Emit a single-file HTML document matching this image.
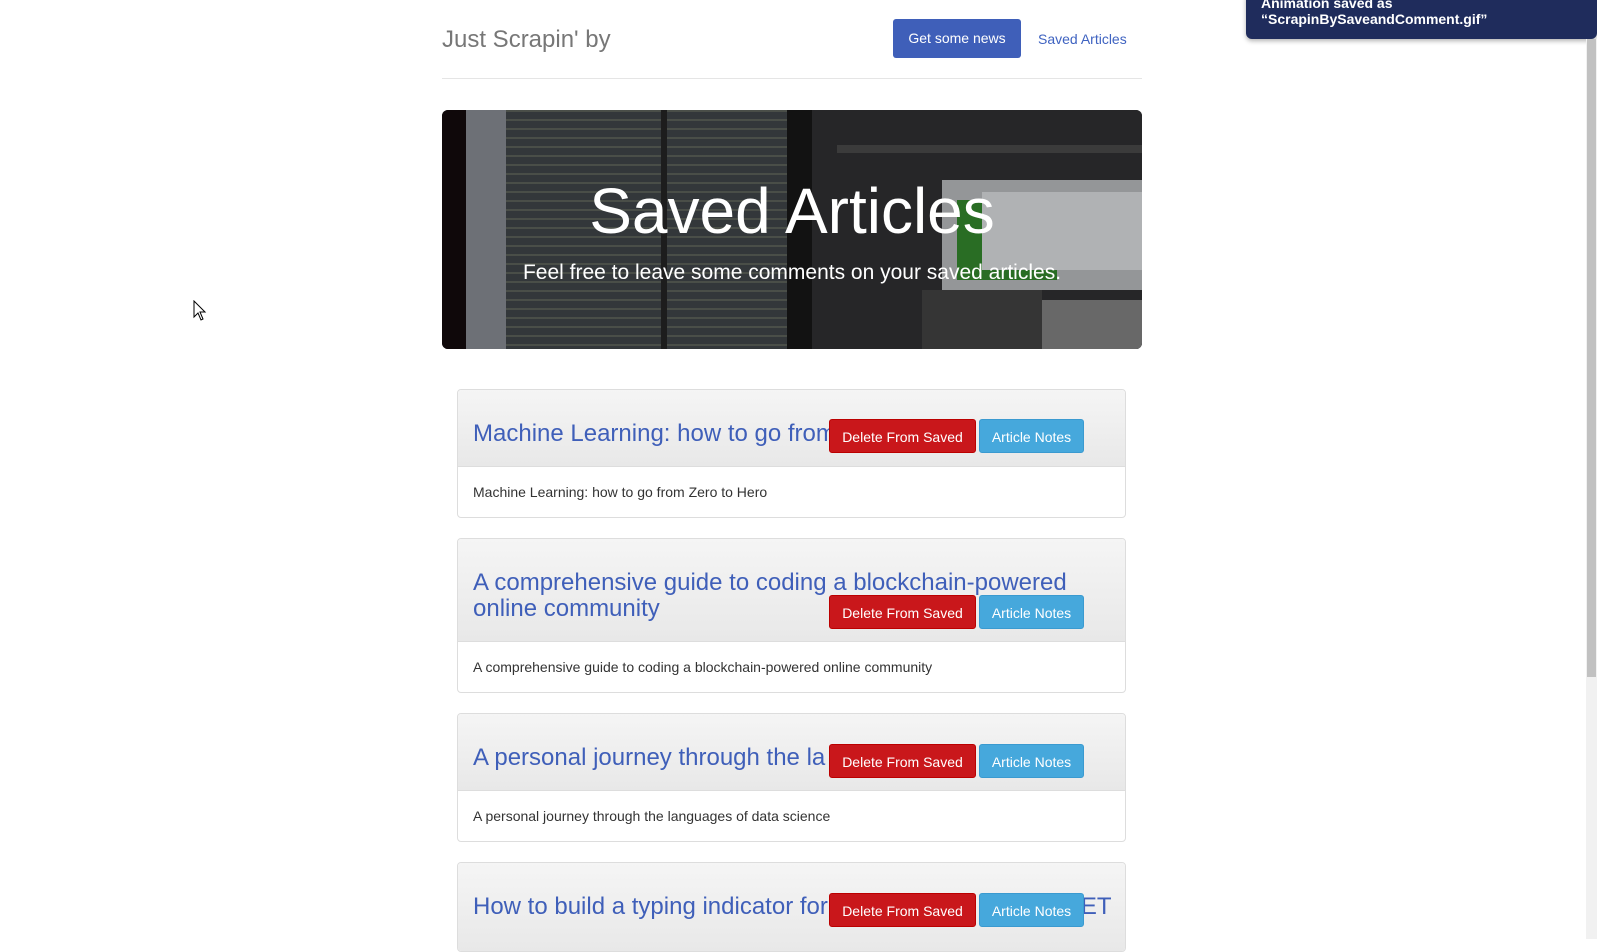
<!DOCTYPE html>
<html><head><meta charset="utf-8"><style>
*{box-sizing:border-box}
body{margin:0;width:1597px;height:939px;overflow:hidden;background:#fff;font-family:"Liberation Sans",sans-serif;position:relative}
.abs{position:absolute}
.brand{left:442px;top:26px;font-size:24px;color:#777}
.btnnav{left:893px;top:19px;width:128px;height:39px;background:#3f5fb9;color:#fff;font-size:14px;border-radius:3px;text-align:center;line-height:39px}
.link2{left:1038px;top:31px;font-size:14px;color:#3f63c1}
.hr{left:442px;top:78px;width:700px;height:1px;background:#e5e5e5}
.jumbo{left:442px;top:110px;width:700px;height:239px;border-radius:6px;overflow:hidden;background:#1a1a1a}
.jumbo .bg{position:absolute;top:0;height:100%}
.code{background:repeating-linear-gradient(180deg,rgba(200,210,150,.18) 0 2px,transparent 2px 9px),#3b3f43}
.h1{position:absolute;left:0;width:700px;top:69px;line-height:64px;text-align:center;color:#fff;font-size:64px}
.sub{position:absolute;left:0;width:700px;top:152px;line-height:21px;text-align:center;color:#fff;font-size:21px}
.card{left:457px;width:669px;border:1px solid #ddd;border-radius:4px;overflow:hidden;background:#fff}
.ch{background:linear-gradient(#f5f5f5,#e8e8e8);border-bottom:1px solid #ddd;position:relative}
.ch h3{margin:0;position:absolute;left:15px;font-size:24px;font-weight:normal;color:#3f5fb9;line-height:26px}
.cb{padding:0 15px;font-size:14px;color:#333;height:50px;line-height:50px}
.del,.note{position:absolute;height:34px;line-height:34px;color:#fff;font-size:14px;text-align:center;border-radius:3px}
.del{left:371px;width:147px;background:#c9171b;border:1px solid #b00}
.note{left:521px;width:105px;background:#46a8dc;border:1px solid #3a9ad0}
</style></head><body>
<div class="abs brand">Just Scrapin' by</div>
<div class="abs btnnav">Get some news</div>
<div class="abs link2">Saved Articles</div>
<div class="abs hr"></div>
<div class="abs jumbo">
<div class="bg" style="left:0;width:24px;background:#120a0c"></div>
<div class="bg" style="left:24px;width:40px;background:#7d8087"></div>
<div class="bg code" style="left:64px;width:155px"></div>
<div class="bg" style="left:219px;width:6px;background:#222"></div>
<div class="bg code" style="left:225px;width:120px"></div>
<div class="bg" style="left:345px;width:25px;background:#151515"></div>
<div class="bg" style="left:370px;width:330px;background:#2c2c2e"></div>
<div class="bg" style="left:395px;top:35px;width:305px;height:8px;background:#444"></div>
<div class="bg" style="left:500px;top:70px;width:200px;height:110px;background:#a9abad"></div>
<div class="bg" style="left:515px;top:90px;width:100px;height:80px;background:#2f7d2a"></div>
<div class="bg" style="left:540px;top:82px;width:160px;height:78px;background:#c9cbcd"></div>
<div class="bg" style="left:480px;top:180px;width:120px;height:59px;background:#3d3d3d"></div>
<div class="bg" style="left:600px;top:190px;width:100px;height:49px;background:#777"></div>
<div class="bg" style="left:0;width:700px;background:rgba(0,0,0,.12)"></div>
<div class="h1">Saved Articles</div>
<div class="sub">Feel free to leave some comments on your saved articles.</div>
</div>

<div class="abs card" style="top:389px"><div class="ch" style="height:77px"><h3 style="top:31px">Machine Learning: how to go from</h3><div class="del" style="top:29px">Delete From Saved</div><div class="note" style="top:29px">Article Notes</div></div><div class="cb">Machine Learning: how to go from Zero to Hero</div></div>

<div class="abs card" style="top:538px"><div class="ch" style="height:103px"><h3 style="top:31px">A comprehensive guide to coding a blockchain-powered<br>online community</h3><div class="del" style="top:56px">Delete From Saved</div><div class="note" style="top:56px">Article Notes</div></div><div class="cb">A comprehensive guide to coding a blockchain-powered online community</div></div>

<div class="abs card" style="top:713px"><div class="ch" style="height:77px"><h3 style="top:31px">A personal journey through the la<span style="margin-left:203px">e</span></h3><div class="del" style="top:30px">Delete From Saved</div><div class="note" style="top:30px">Article Notes</div></div><div class="cb">A personal journey through the languages of data science</div></div>

<div class="abs card" style="top:862px;height:90px"><div class="ch" style="height:90px"><h3 style="top:31px">How to build a typing indicator for<span style="margin-left:253px">ET</span></h3><div class="del" style="top:30px">Delete From Saved</div><div class="note" style="top:30px">Article Notes</div></div></div>

<div class="abs" style="left:1246px;top:-5px;width:351px;height:44px;background:#1f2c5c;border-radius:0 0 6px 6px;box-shadow:0 2px 5px rgba(0,0,0,.3);color:#fff;font-weight:bold;font-size:14px;padding:0 15px;line-height:16px">Animation saved as<br>“ScrapinBySaveandComment.gif”</div>
<div class="abs" style="left:1586px;top:39px;width:11px;height:900px;background:#f1f1f1"></div>
<div class="abs" style="left:1587px;top:39px;width:9px;height:638px;background:#c1c1c1"></div>
<svg class="abs" style="left:193px;top:300px" width="14" height="22" viewBox="0 0 14 22"><path d="M1 1 L1 17 L5 13 L8 20 L10 19 L7 12 L12 12 Z" fill="#fff" stroke="#000" stroke-width="1"/></svg>
</body></html>
